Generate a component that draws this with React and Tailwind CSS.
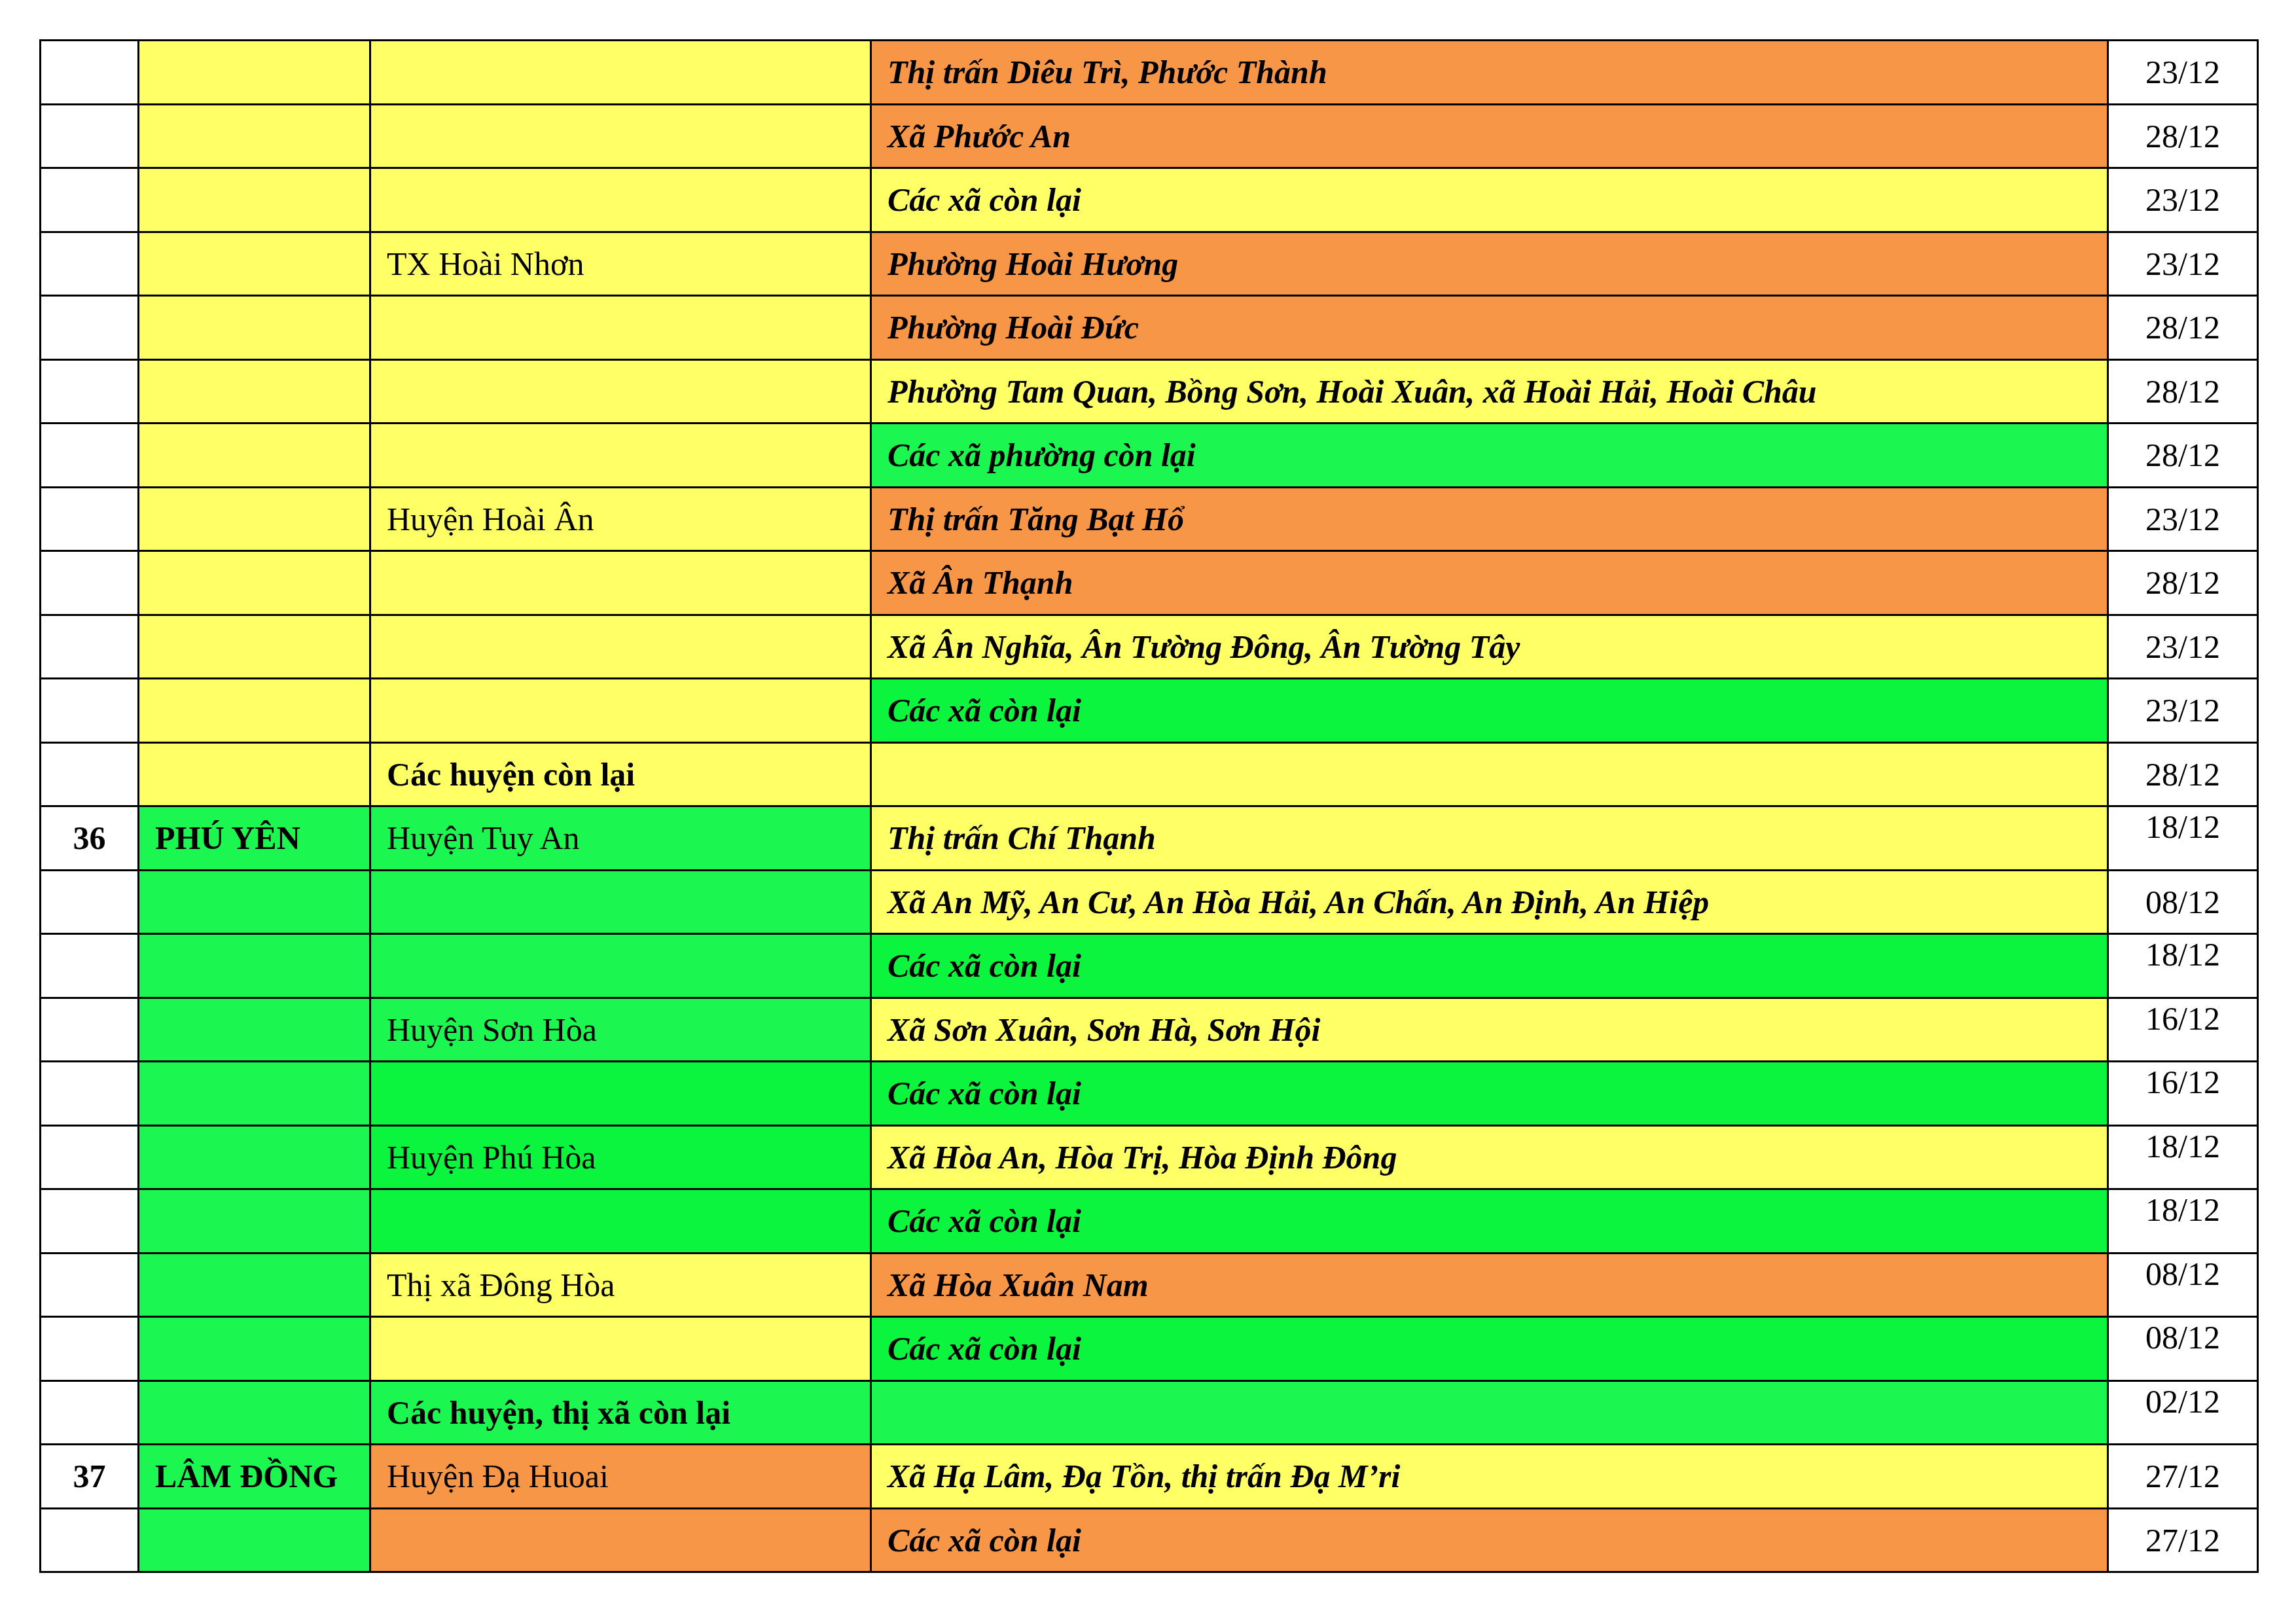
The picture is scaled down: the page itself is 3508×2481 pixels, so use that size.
const Y = 'bg-[#ffff66]'
const O = 'bg-[#f79646]'
const G = 'bg-[#1cf650]'
const D = 'bg-[#0bf43e]'

// [stt, tỉnh, huyện, xã, ngày, màu cột 2/3/4, huyện in đậm, ngày canh trên]
const rows = [
  ['', '', '', 'Thị trấn Diêu Trì, Phước Thành', '23/12', [Y, Y, O]],
  ['', '', '', 'Xã Phước An', '28/12', [Y, Y, O]],
  ['', '', '', 'Các xã còn lại', '23/12', [Y, Y, Y]],
  ['', '', 'TX Hoài Nhơn', 'Phường Hoài Hương', '23/12', [Y, Y, O]],
  ['', '', '', 'Phường Hoài Đức', '28/12', [Y, Y, O]],
  ['', '', '', 'Phường Tam Quan, Bồng Sơn, Hoài Xuân, xã Hoài Hải, Hoài Châu', '28/12', [Y, Y, Y]],
  ['', '', '', 'Các xã phường còn lại', '28/12', [Y, Y, G]],
  ['', '', 'Huyện Hoài Ân', 'Thị trấn Tăng Bạt Hổ', '23/12', [Y, Y, O]],
  ['', '', '', 'Xã Ân Thạnh', '28/12', [Y, Y, O]],
  ['', '', '', 'Xã Ân Nghĩa, Ân Tường Đông, Ân Tường Tây', '23/12', [Y, Y, Y]],
  ['', '', '', 'Các xã còn lại', '23/12', [Y, Y, D]],
  ['', '', 'Các huyện còn lại', '', '28/12', [Y, Y, Y], true],
  ['36', 'PHÚ YÊN', 'Huyện Tuy An', 'Thị trấn Chí Thạnh', '18/12', [G, G, Y], false, true],
  ['', '', '', 'Xã An Mỹ, An Cư, An Hòa Hải, An Chấn, An Định, An Hiệp', '08/12', [G, G, Y]],
  ['', '', '', 'Các xã còn lại', '18/12', [G, G, D], false, true],
  ['', '', 'Huyện Sơn Hòa', 'Xã Sơn Xuân, Sơn Hà, Sơn Hội', '16/12', [G, G, Y], false, true],
  ['', '', '', 'Các xã còn lại', '16/12', [G, D, D], false, true],
  ['', '', 'Huyện Phú Hòa', 'Xã Hòa An, Hòa Trị, Hòa Định Đông', '18/12', [G, D, Y], false, true],
  ['', '', '', 'Các xã còn lại', '18/12', [G, D, D], false, true],
  ['', '', 'Thị xã Đông Hòa', 'Xã Hòa Xuân Nam', '08/12', [G, Y, O], false, true],
  ['', '', '', 'Các xã còn lại', '08/12', [G, Y, D], false, true],
  ['', '', 'Các huyện, thị xã còn lại', '', '02/12', [G, G, G], true, true],
  ['37', 'LÂM ĐỒNG', 'Huyện Đạ Huoai', 'Xã Hạ Lâm, Đạ Tồn, thị trấn Đạ M’ri', '27/12', [G, O, Y]],
  ['', '', '', 'Các xã còn lại', '27/12', [G, O, O]],
]

export default function App() {
  return (
    <div className="w-[3508px] h-[2481px] bg-white pt-[60px] pl-[60px] font-['Liberation_Serif',serif] text-[50px] text-black">
      <table className="border-collapse table-fixed w-[3388px]">
        <colgroup>
          <col className="w-[150px]" />
          <col className="w-[354px]" />
          <col className="w-[765px]" />
          <col className="w-[1890px]" />
          <col className="w-[229px]" />
        </colgroup>
        <tbody>
          {rows.map(([stt, tinh, huyen, xa, ngay, colors, huyenBold, ngayTop], i) => (
            <tr key={i} className="h-[97.5px]">
              <td className="border-[3px] border-black bg-white text-center font-bold align-middle p-0 leading-none">{stt}</td>
              <td className={`border-[3px] border-black ${colors[0]} pl-[24px] font-bold align-middle whitespace-nowrap leading-none`}>{tinh}</td>
              <td className={`border-[3px] border-black ${colors[1]} pl-[24px] align-middle whitespace-nowrap leading-none ${huyenBold ? 'font-bold' : ''}`}>{huyen}</td>
              <td className={`border-[3px] border-black ${colors[2]} pl-[24px] font-bold italic align-middle whitespace-nowrap leading-none`}>{xa}</td>
              <td className={`border-[3px] border-black bg-white text-center whitespace-nowrap ${ngayTop ? 'align-top pt-[5px] leading-none' : 'align-middle leading-none'}`}>{ngay}</td>
            </tr>
          ))}
        </tbody>
      </table>
    </div>
  )
}
